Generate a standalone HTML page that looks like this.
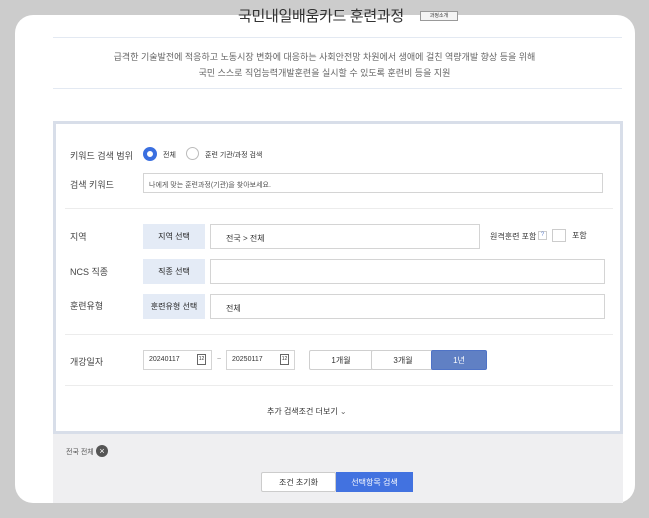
<!DOCTYPE html>
<html><head><meta charset="utf-8"><style>
*{margin:0;padding:0;box-sizing:border-box}
body{width:649px;height:518px;background:#cccccc;position:relative;overflow:hidden;font-family:"Liberation Sans","Noto Sans CJK KR",sans-serif;color:#333}
.a{position:absolute}
.card{left:15px;top:15px;width:620px;height:488px;background:#fff;border-radius:18px}
.t{font-size:9px;white-space:nowrap}
.lbl{font-size:9px;color:#444}
.inp{border:1px solid #d4d4d4;background:#fff}
.btn{background:#e4ebf6;font-size:8px;text-align:center;color:#222}
.pb{border:1px solid #cfcfcf;background:#fff;font-size:8px;text-align:center;line-height:19px;border-radius:2px}
.sep{height:1px;background:#ececec}
</style></head><body>
<div class="a card"></div>
<div class="a" style="left:238px;top:5px;font-size:15px;letter-spacing:-0.3px;color:#333;white-space:nowrap">국민내일배움카드 훈련과정</div>
<div class="a" style="left:420px;top:11px;width:38px;height:10px;border:1px solid #999;background:#f4f4f4;font-size:5px;text-align:center;line-height:8px">과정소개</div>
<div class="a" style="left:53px;top:37px;width:569px;height:1px;background:#e3e9f2"></div>
<div class="a t" style="left:0;width:649px;text-align:center;top:49px;color:#666;font-size:9px;line-height:16px">급격한 기술발전에 적응하고 노동시장 변화에 대응하는 사회안전망 차원에서 생애에 걸친 역량개발 향상 등을 위해<br>국민 스스로 직업능력개발훈련을 실시할 수 있도록 훈련비 등을 지원</div>
<div class="a" style="left:53px;top:88px;width:569px;height:1px;background:#e3e9f2"></div>

<div class="a" style="left:53px;top:434px;width:570px;height:69px;background:#efeff1"></div>
<div class="a" style="left:53px;top:121px;width:570px;height:313px;border:3px solid #d8dee9;background:#fff"></div>

<div class="a lbl" style="left:70px;top:149px">키워드 검색 범위</div>
<div class="a" style="left:143px;top:147px;width:14px;height:14px;border-radius:50%;border:4px solid #3a6fe0;background:#fff"></div>
<div class="a t" style="left:163px;top:150px;font-size:7px">전체</div>
<div class="a" style="left:186px;top:147px;width:13px;height:13px;border-radius:50%;border:1px solid #bbb"></div>
<div class="a t" style="left:205px;top:150px;font-size:7px">훈련 기관/과정 검색</div>

<div class="a lbl" style="left:70px;top:178px">검색 키워드</div>
<div class="a inp" style="left:143px;top:173px;width:460px;height:20px;font-size:7px;color:#555;padding:6px 0 0 5px">나에게 맞는 훈련과정(기관)을 찾아보세요.</div>
<div class="a sep" style="left:65px;top:208px;width:548px"></div>

<div class="a lbl" style="left:70px;top:230px">지역</div>
<div class="a btn" style="left:143px;top:224px;width:62px;height:25px;line-height:25px">지역 선택</div>
<div class="a inp" style="left:210px;top:224px;width:270px;height:25px;font-size:8px;padding:8px 0 0 15px">전국 &gt; 전체</div>
<div class="a t" style="left:490px;top:231px;font-size:8px">원격훈련 포함</div>
<div class="a" style="left:538px;top:231px;width:9px;height:9px;border:1px solid #ccc;font-size:6px;color:#6a8ad0;text-align:center;line-height:7px">?</div>
<div class="a" style="left:552px;top:229px;width:14px;height:13px;border:1px solid #ccc"></div>
<div class="a t" style="left:572px;top:230px;font-size:8px">포함</div>

<div class="a lbl" style="left:70px;top:265px">NCS 직종</div>
<div class="a btn" style="left:143px;top:259px;width:62px;height:25px;line-height:25px">직종 선택</div>
<div class="a inp" style="left:210px;top:259px;width:395px;height:25px"></div>

<div class="a lbl" style="left:70px;top:299px">훈련유형</div>
<div class="a btn" style="left:143px;top:294px;width:62px;height:25px;line-height:25px">훈련유형 선택</div>
<div class="a inp" style="left:210px;top:294px;width:395px;height:25px;font-size:8px;padding:8px 0 0 15px">전체</div>
<div class="a sep" style="left:65px;top:334px;width:548px"></div>

<div class="a lbl" style="left:70px;top:355px">개강일자</div>
<div class="a inp" style="left:143px;top:350px;width:69px;height:20px;font-size:7px;padding:5px 0 0 5px">20240117<span style="position:absolute;right:5px;top:3px;width:9px;height:11px;border:1px solid #666;font-size:5px;line-height:9px;text-align:center">12</span></div>
<div class="a t" style="left:217px;top:356px;font-size:7px;color:#888">~</div>
<div class="a inp" style="left:226px;top:350px;width:69px;height:20px;font-size:7px;padding:5px 0 0 5px">20250117<span style="position:absolute;right:5px;top:3px;width:9px;height:11px;border:1px solid #666;font-size:5px;line-height:9px;text-align:center">12</span></div>
<div class="a pb" style="left:309px;top:350px;width:64px;height:20px">1개월</div>
<div class="a pb" style="left:371px;top:350px;width:64px;height:20px">3개월</div>
<div class="a pb" style="left:431px;top:350px;width:56px;height:20px;background:#6080c4;border-color:#4f73c6;color:#fff">1년</div>
<div class="a sep" style="left:65px;top:385px;width:548px"></div>

<div class="a t" style="left:267px;top:406px;font-size:8px">추가 검색조건 더보기 <span style="color:#666;font-size:8px">&#8964;</span></div>

<div class="a t" style="left:66px;top:447px;font-size:7px;color:#555">전국 전체</div>
<div class="a" style="left:96px;top:445px;width:12px;height:12px;border-radius:50%;background:#555;color:#fff;font-size:9px;text-align:center;line-height:12px">×</div>

<div class="a pb" style="left:261px;top:472px;width:75px;height:20px;border-color:#ccc">조건 초기화</div>
<div class="a pb" style="left:336px;top:472px;width:77px;height:20px;background:#4272e0;border-color:#4272e0;color:#fff;border-radius:0">선택항목 검색</div>
</body></html>
